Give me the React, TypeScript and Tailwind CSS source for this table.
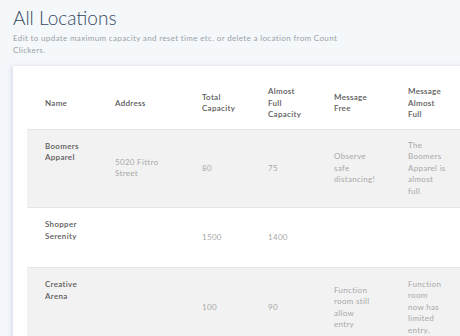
const rows = [
  {
    name: ["Boomers", "Apparel"],
    address: ["5020 Fittro", "Street"],
    total: "80",
    almost: "75",
    free: ["Observe", "safe", "distancing!"],
    full: ["The", "Boomers", "Apparel is", "almost", "full"],
    shade: true,
    h: "h-[77px]",
  },
  {
    name: ["Shopper", "Serenity"],
    address: [],
    total: "1500",
    almost: "1400",
    free: [],
    full: [],
    shade: false,
    h: "h-[60px]",
  },
  {
    name: ["Creative", "Arena"],
    address: [],
    total: "100",
    almost: "90",
    free: ["Function", "room still", "allow", "entry"],
    full: ["Function", "room", "now has", "limited", "entry."],
    shade: true,
    h: "h-[80px]",
  },
];

function Lines({ items }: { items: string[] }) {
  return (
    <>
      {items.map((t) => (
        <span key={t} className="block whitespace-nowrap">
          {t}
        </span>
      ))}
    </>
  );
}

export default function App() {
  return (
    <div
      className="min-h-[336px] w-[460px] overflow-hidden bg-[#f5f8fb] pl-[13px] pt-[5px]"
      style={{ fontFamily: "Lato, 'Open Sans', sans-serif" }}
    >
      <h1 className="text-[19px] leading-[26px] font-light text-[#34495e]">All Locations</h1>
      <p className="mt-[2px] w-[330px] text-[8px] leading-[11.5px] tracking-[0.35px] text-[#9aa0a6]">
        Edit to update maximum capacity and reset time etc. or delete a location from Count Clickers.
      </p>

      <div className="mt-[10px] w-[460px] bg-white px-[14px] pt-[12px] shadow-[-2px_0_4px_rgba(200,210,220,0.6)]">
        <table className="w-[440px] table-fixed border-collapse text-[8px] leading-[11.5px] tracking-[0.3px]">
          <colgroup>
            <col className="w-[88px]" />
            <col className="w-[87px]" />
            <col className="w-[66px]" />
            <col className="w-[66px]" />
            <col className="w-[74px]" />
            <col className="w-[59px]" />
          </colgroup>
          <thead>
            <tr className="h-[51px] border-b border-[#e6e6e6] text-left text-[#5a5a5a]">
              <th className="pl-[18px] font-semibold">Name</th>
              <th className="font-semibold">Address</th>
              <th className="font-semibold">
                <Lines items={["Total", "Capacity"]} />
              </th>
              <th className="font-semibold">
                <Lines items={["Almost", "Full", "Capacity"]} />
              </th>
              <th className="font-semibold">
                <Lines items={["Message", "Free"]} />
              </th>
              <th className="font-semibold">
                <Lines items={["Message", "Almost", "Full"]} />
              </th>
            </tr>
          </thead>
          <tbody>
            {rows.map((r) => (
              <tr
                key={r.name[0]}
                className={`${r.h} border-b border-[#e6e6e6] text-[#a8a8a8] ${r.shade ? "bg-[#f2f2f2]" : "bg-white"}`}
              >
                <td className="pl-[18px] pt-[11px] align-top font-semibold text-[#5a5a5a]">
                  <Lines items={r.name} />
                </td>
                <td className="align-middle">
                  <Lines items={r.address} />
                </td>
                <td className="align-middle">{r.total}</td>
                <td className="align-middle">{r.almost}</td>
                <td className="align-middle">
                  <Lines items={r.free} />
                </td>
                <td className="py-[10px] align-middle">
                  <Lines items={r.full} />
                </td>
              </tr>
            ))}
          </tbody>
        </table>
      </div>
    </div>
  );
}
